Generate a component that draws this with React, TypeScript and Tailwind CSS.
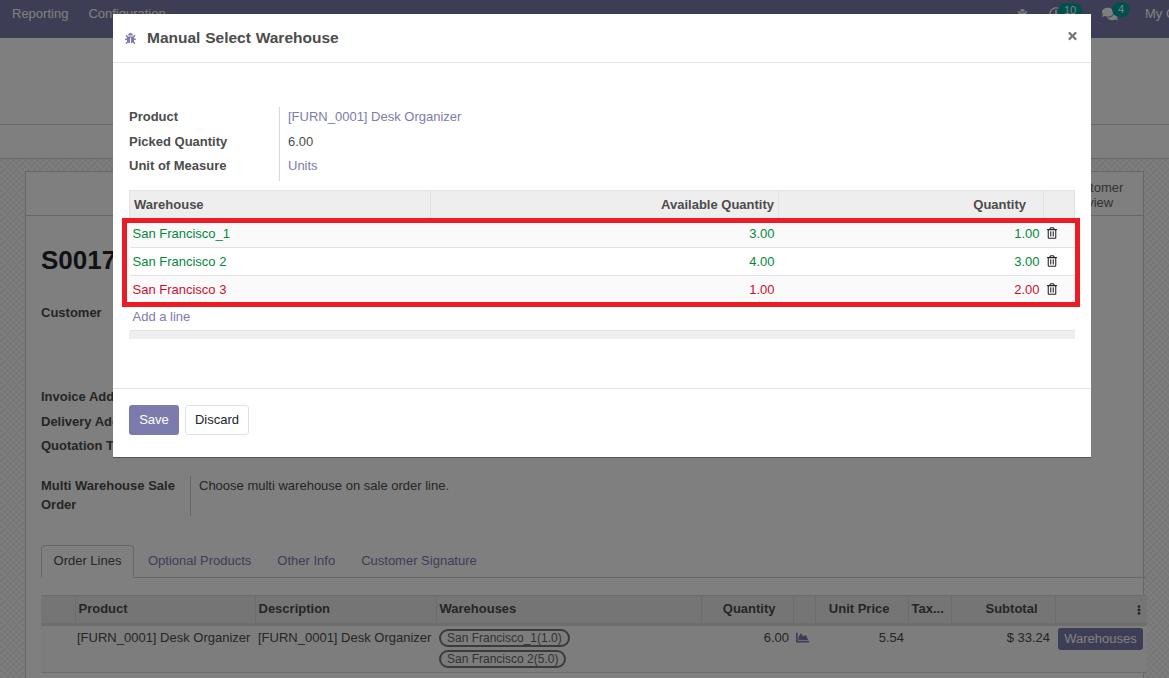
import { FaBug, FaTimes, FaRegTrashAlt, FaChartArea, FaEllipsisV, FaComments, FaRegClock } from 'react-icons/fa';

const warehouses = [
  { name: 'San Francisco_1', available: '3.00', quantity: '1.00', color: 'text-[#008a3a]', bg: 'bg-[#fafafa]' },
  { name: 'San Francisco 2', available: '4.00', quantity: '3.00', color: 'text-[#008a3a]', bg: 'bg-white' },
  { name: 'San Francisco 3', available: '1.00', quantity: '2.00', color: 'text-[#c8102e]', bg: 'bg-[#fafafa]' },
];

function OrderPage() {
  return (
    <div className="h-[678px] flex flex-col bg-[repeating-conic-gradient(#eeeeee_0%_25%,#fafafa_0%_50%)] bg-[length:6px_6px]">
      <nav className="h-[38px] shrink-0 bg-[#7c7bad] flex items-center pl-3 pb-[10px] text-white text-[13px]">
        <span>Reporting</span>
        <span className="ml-[20px]">Configuration</span>
        <div className="ml-auto flex items-center">
          <FaBug className="w-[11px] h-[11px] mr-[21px]" />
          <div className="relative mr-[39px]">
            <FaRegClock className="w-[14px] h-[14px]" />
            <span className="absolute left-[9px] -top-[4px] px-[6px] rounded-full bg-[#00a09d] text-[11px] leading-[15px]">10</span>
          </div>
          <div className="relative mr-[27px]">
            <FaComments className="w-[16px] h-[16px]" />
            <span className="absolute left-[10px] -top-[4px] px-[6px] rounded-full bg-[#00a09d] text-[11px] leading-[15px]">4</span>
          </div>
          <span className="w-[24px] overflow-hidden whitespace-nowrap">My Company</span>
        </div>
      </nav>
      <div className="h-[87px] shrink-0 bg-white border-b border-[#cfcfcf]" />
      <div className="h-[34px] shrink-0 bg-white border-b border-[#cfcfcf]" />

      <div className="mt-[12px] ml-[25px] w-[1119px] flex-1 bg-white border border-[#cfcfcf] border-b-0 flex flex-col">
        <div className="h-[44px] shrink-0 border-b border-[#cfcfcf] flex justify-end">
          <div className="w-[76px] pt-[8px] text-[13px] leading-[15px] text-[#666]">
            Customer
            <br />
            Preview
          </div>
        </div>
        <div className="pl-[15px] pt-[26px] text-[#4c4c4c]">
          <h1 className="text-[26px] leading-[36px] font-bold text-[#212529]">S00171</h1>
          <div className="mt-[25px] text-[13px] font-bold leading-[20px]">Customer</div>
          <div className="mt-[62px] text-[13px] font-bold leading-[24.5px]">
            <div>Invoice Address</div>
            <div>Delivery Address</div>
            <div>Quotation Template</div>
          </div>
          <div className="mt-[17px] flex text-[13px] leading-[19px]">
            <div className="w-[150px] font-bold pr-2 border-r border-[#cfcfcf] pb-[2px]">Multi Warehouse Sale Order</div>
            <div className="pl-[8px]">Choose multi warehouse on sale order line.</div>
          </div>
          <div className="mt-[29px] mr-[-3px] h-[33px] flex items-stretch border-b border-[#cfcfcf] text-[13px] text-[#7c7bad]">
            <div className="w-[93px] h-[33px] -mb-px border border-[#cfcfcf] border-b-white bg-white rounded-t text-[#4c4c4c] flex items-center justify-center">Order Lines</div>
            <div className="ml-[14px] flex items-center">Optional Products</div>
            <div className="ml-[26px] flex items-center">Other Info</div>
            <div className="ml-[26px] flex items-center">Customer Signature</div>
          </div>
          <table className="mt-[17px] w-[1106px] table-fixed text-[13px]">
            <thead>
              <tr className="h-[29px] bg-[#ebebeb] border-y border-[#d9d9d9] border-b-[3px] border-b-[#dcdcdc] font-bold text-[#4c4c4c]">
                <th className="w-[34px]" />
                <th className="w-[180px] px-[3px] text-left border-l border-[#d9d9d9]">Product</th>
                <th className="w-[181px] px-[3px] text-left border-l border-[#d9d9d9]">Description</th>
                <th className="w-[265px] px-[3px] text-left border-l border-[#d9d9d9]">Warehouses</th>
                <th className="w-[92px] px-[3px] text-right pr-[17px] border-l border-[#d9d9d9]">Quantity</th>
                <th className="w-[22px] border-l border-[#d9d9d9]" />
                <th className="w-[93px] pr-[18px] text-right border-l border-[#d9d9d9]">Unit Price</th>
                <th className="w-[43px] px-[3px] text-left border-l border-[#d9d9d9]">Tax...</th>
                <th className="w-[104px] pr-[17px] text-right border-l border-[#d9d9d9]">Subtotal</th>
                <th className="pr-[3px] text-right border-l border-[#d9d9d9]">
                  <FaEllipsisV className="inline w-[10px] h-[10px]" />
                </th>
              </tr>
            </thead>
            <tbody>
              <tr className="h-[48px] border-b border-[#d9d9d9] align-top text-[#4c4c4c] bg-[#fafafa]">
                <td />
                <td className="pt-[2px] pl-[2px] whitespace-nowrap">[FURN_0001] Desk Organizer</td>
                <td className="pt-[2px] pl-[3px] whitespace-nowrap">[FURN_0001] Desk Organizer</td>
                <td className="pl-[3px] pt-[3px] text-[12px] text-[#666]">
                  <div className="flex flex-col items-start gap-[3px]">
                    <span className="h-[18px] leading-[14px] px-[6px] border-2 border-[#777] rounded-full whitespace-nowrap">San Francisco_1(1.0)</span>
                    <span className="h-[18px] leading-[14px] px-[6px] border-2 border-[#777] rounded-full whitespace-nowrap">San Francisco 2(5.0)</span>
                  </div>
                </td>
                <td className="pt-[2px] pr-[4px] text-right">6.00</td>
                <td className="pt-[5px] pl-[2px] text-[#7c7bad]">
                  <FaChartArea className="w-[15px] h-[13px]" />
                </td>
                <td className="pt-[2px] pr-[4px] text-right">5.54</td>
                <td />
                <td className="pt-[2px] pr-[5px] text-right">$ 33.24</td>
                <td className="pl-[3px] pt-[2px]">
                  <span className="block w-[85px] h-[22px] leading-[22px] text-center bg-[#7c7bad] text-white rounded-[3px]">Warehouses</span>
                </td>
              </tr>
            </tbody>
          </table>
        </div>
      </div>
    </div>
  );
}

function SelectWarehouseModal() {
  return (
    <div className="absolute left-[113px] top-[14px] w-[978px] h-[443px] bg-white shadow-[0_1px_0_#555] flex flex-col text-[13px] text-[#4c4c4c]">
      <header className="h-[49px] shrink-0 border-b border-[#e2e2ea] flex items-center pl-[12px] pr-[13px]">
        <FaBug className="w-[11px] h-[11px] text-[#7c7bad]" />
        <h2 className="ml-[11px] text-[15.5px] font-bold [word-spacing:0.5px]">Manual Select Warehouse</h2>
        <FaTimes className="ml-auto mb-[5px] w-[11px] h-[12px] text-[#777]" />
      </header>

      <div className="flex-1 px-[16px] pt-[44px] relative">
        <div className="flex h-[74px]">
          <div className="w-[151px] shrink-0 border-r border-[#d9d9d9] font-bold leading-[24.5px]">
            <div className="-mt-[2px]">
              <div>Product</div>
              <div>Picked Quantity</div>
              <div>Unit of Measure</div>
            </div>
          </div>
          <div className="pl-[8px] leading-[24.5px] whitespace-nowrap">
            <div className="-mt-[2px]">
              <div className="text-[#7c7bad]">[FURN_0001] Desk Organizer</div>
              <div>6.00</div>
              <div className="text-[#7c7bad]">Units</div>
            </div>
          </div>
        </div>

        <table className="mt-[9px] w-[946px] table-fixed">
          <thead>
            <tr className="h-[29px] bg-[#eeeeee] border border-[#e2e2e2] font-bold">
              <th className="w-[301px] pl-[4px] text-left">Warehouse</th>
              <th className="w-[348px] pr-[4px] text-right border-l border-[#e2e2e2]">Available Quantity</th>
              <th className="w-[265px] pr-[17px] text-right border-l border-[#e2e2e2]">Quantity</th>
              <th className="border-l border-[#e2e2e2]" />
            </tr>
          </thead>
          <tbody>
            {warehouses.map((w) => (
              <tr key={w.name} className={`h-[28px] border-b border-[#e2e2e2] ${w.bg} ${w.color}`}>
                <td className="pl-[3px]">{w.name}</td>
                <td className="pr-[4px] text-right">{w.available}</td>
                <td className="pr-[4px] text-right">{w.quantity}</td>
                <td className="pl-[3px] text-[#212529]">
                  <FaRegTrashAlt className="w-[10px] h-[12px] -mt-[1px]" />
                </td>
              </tr>
            ))}
            <tr className="h-[27px] border-b border-[#e2e2e2]">
              <td colSpan={4} className="pl-[3px] text-[#7c7bad]">Add a line</td>
            </tr>
          </tbody>
        </table>
        <div className="h-[8px] w-[946px] bg-[#eeeeee]" />

        <div className="absolute left-[9px] top-[155px] w-[958px] h-[89px] border-[5px] border-[#ed1c24]" />
      </div>

      <footer className="h-[69px] shrink-0 border-t border-[#e2e2e2] flex items-start gap-[6px] pl-[16px] pt-[16px]">
        <button className="w-[50px] h-[30px] rounded-[3px] bg-[#7c7bad] text-white">Save</button>
        <button className="w-[64px] h-[30px] rounded-[3px] bg-white border border-[#dee2e6] text-[#212529]">Discard</button>
      </footer>
    </div>
  );
}

export default function App() {
  return (
    <div className="relative w-[1169px] h-[678px] overflow-hidden font-['Liberation_Sans',Arial,sans-serif]">
      <OrderPage />
      <div className="absolute inset-0 bg-black/50" />
      <SelectWarehouseModal />
    </div>
  );
}
